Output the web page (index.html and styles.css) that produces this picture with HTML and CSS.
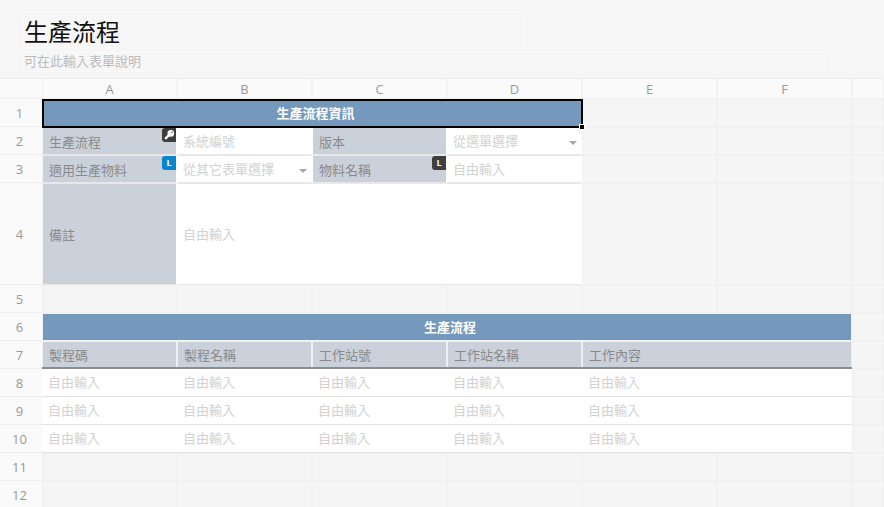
FILE: index.html
```html
<!DOCTYPE html>
<html lang="zh-Hant">
<head>
<meta charset="utf-8">
<title>生產流程</title>
<link rel="stylesheet" href="styles.css">
</head>
<body>
<header class="form-head">
  <h1 class="form-title">生產流程</h1>
  <p class="form-desc">可在此輸入表單說明</p>
</header>
<main class="sheet">
  <div class="corner"></div>
  <div class="col-h">A</div><div class="col-h">B</div><div class="col-h">C</div><div class="col-h">D</div><div class="col-h">E</div><div class="col-h">F</div><div class="col-h"></div>

  <div class="row-h">1</div>
  <div class="cell banner span-4 selected">生產流程資訊<span class="sel-handle"></span></div>
  <div class="cell"></div><div class="cell"></div><div class="cell"></div>

  <div class="row-h">2</div>
  <div class="cell label first">生產流程<span class="badge badge-dark"><svg class="key" viewBox="0 0 14 14"><circle cx="8.8" cy="5.4" r="3.3" fill="#fff"/><path d="M7 7.2 3.2 10.8" stroke="#fff" stroke-width="2.4" fill="none"/><circle cx="10" cy="4.2" r=".7" fill="#3e3e3e"/></svg></span></div>
  <div class="cell input ph">系統編號</div>
  <div class="cell label">版本</div>
  <div class="cell input ph">從選單選擇<span class="caret"></span></div>
  <div class="cell"></div><div class="cell"></div><div class="cell"></div>

  <div class="row-h">3</div>
  <div class="cell label first">適用生產物料<span class="badge badge-blue">L</span></div>
  <div class="cell input ph">從其它表單選擇<span class="caret"></span></div>
  <div class="cell label">物料名稱<span class="badge badge-dark">L</span></div>
  <div class="cell input ph">自由輸入</div>
  <div class="cell"></div><div class="cell"></div><div class="cell"></div>

  <div class="row-h tall">4</div>
  <div class="cell label first tall">備註</div>
  <div class="cell input ph span-3 tall">自由輸入</div>
  <div class="cell"></div><div class="cell"></div><div class="cell"></div>

  <div class="row-h">5</div>
  <div class="cell"></div><div class="cell"></div><div class="cell"></div><div class="cell"></div><div class="cell"></div><div class="cell"></div><div class="cell"></div>

  <div class="row-h">6</div>
  <div class="cell banner span-6">生產流程</div>
  <div class="cell"></div>

  <div class="row-h">7</div>
  <div class="cell th">製程碼</div><div class="cell th">製程名稱</div><div class="cell th">工作站號</div><div class="cell th">工作站名稱</div><div class="cell th span-2">工作內容</div>
  <div class="cell"></div>

  <div class="row-h">8</div>
  <div class="cell td ph">自由輸入</div><div class="cell td ph">自由輸入</div><div class="cell td ph">自由輸入</div><div class="cell td ph">自由輸入</div><div class="cell td ph span-2">自由輸入</div>
  <div class="cell"></div>

  <div class="row-h">9</div>
  <div class="cell td ph">自由輸入</div><div class="cell td ph">自由輸入</div><div class="cell td ph">自由輸入</div><div class="cell td ph">自由輸入</div><div class="cell td ph span-2">自由輸入</div>
  <div class="cell"></div>

  <div class="row-h">10</div>
  <div class="cell td ph">自由輸入</div><div class="cell td ph">自由輸入</div><div class="cell td ph">自由輸入</div><div class="cell td ph">自由輸入</div><div class="cell td ph span-2">自由輸入</div>
  <div class="cell"></div>

  <div class="row-h">11</div>
  <div class="cell"></div><div class="cell"></div><div class="cell"></div><div class="cell"></div><div class="cell"></div><div class="cell"></div><div class="cell"></div>

  <div class="row-h">12</div>
  <div class="cell"></div><div class="cell"></div><div class="cell"></div><div class="cell"></div><div class="cell"></div><div class="cell"></div><div class="cell"></div>
</main>
</body>
</html>
```
FILE: styles.css
```css
* { box-sizing: border-box; }
html, body { margin: 0; height: 100%; overflow: hidden; }
body {
  background: #f6f6f6;
  font-family: "Open Sans", "Noto Sans CJK TC", sans-serif;
  font-size: 13px;
  color: #888;
}
.form-head {
  height: 79px;
  padding: 12px 0 0 23px;
  border-bottom: 1px solid #eeeeee;
}
.form-title {
  margin: 0;
  width: 502px;
  height: 36px;
  line-height: 38px;
  font-size: 24px;
  font-weight: 400;
  color: #111;
  border: 1px solid #fafafa;
}
.form-desc {
  margin: 4px 0 0;
  width: 802px;
  height: 20px;
  line-height: 17px;
  font-size: 13px;
  color: #bbb;
  border: 1px solid #fafafa;
}
.sheet {
  display: grid;
  grid-template-columns: 42px repeat(6, 135px) 32px;
  grid-template-rows: 20px 28px 28px 28px 102px repeat(8, 28px);
}
.corner { background: #fafafa; border-bottom: 1px solid #f0f0f0; }
.col-h {
  background: #fafafa;
  border-bottom: 1px solid #f0f0f0;
  border-left: 1px solid #f2f2f2;
  border-right: 1px solid #f2f2f2;
  text-align: center;
  line-height: 20px;
  font-size: 13px;
  color: #999;
}
.row-h {
  background: #fafafa;
  border-bottom: 1px solid #efefef;
  padding-right: 3px;
  text-align: center;
  line-height: 28px;
  font-size: 13px;
  color: #999;
}
.row-h.tall { line-height: 102px; }
.cell {
  position: relative;
  background: #f5f5f5;
  border: 1px solid #f1f1f1;
  padding-left: 6px;
  line-height: 28px;
  white-space: nowrap;
}
.span-2 { grid-column: span 2; }
.span-3 { grid-column: span 3; }
.span-4 { grid-column: span 4; }
.span-6 { grid-column: span 6; }
.banner {
  background: #7499bd;
  border-color: #f2f2f2;
  color: #fff;
  font-weight: 700;
  font-size: 13px;
  text-align: center;
  line-height: 26px;
  padding: 0 0 0 6px;
}
.label {
  background: #cad1da;
  border-color: #e8e8e8 #fff;
  color: #8a8a8a;
}
.label.first { border-left-color: #f2f2f2; }
.label.tall { line-height: 102px; }
.input {
  background: #fff;
  border-color: #e8e8e8 #fff;
  padding-left: 5px;
  line-height: 26px;
}
.input.tall { line-height: 100px; }
.th {
  background: #cad1da;
  border-color: #f0f0f0;
  border-bottom: 0;
  padding-left: 6px;
  color: #8a8a8a;
  line-height: 26px;
}
.th::after {
  content: "";
  position: absolute;
  left: -1px;
  right: -1px;
  bottom: 0;
  height: 2px;
  background: #8c8c8c;
}
.td {
  background: #fff;
  border: 0;
  border-bottom: 1px solid #e2e2e2;
  line-height: 26px;
}
.ph { color: #d2d2d2; }
.selected {
  z-index: 2;
  margin: 0 -1px -1px 0;
  border: 2px solid #000;
  line-height: 24px;
}
.sel-handle {
  position: absolute;
  right: -3px;
  bottom: -3px;
  width: 4px;
  height: 4px;
  background: #000;
  outline: 1px solid #fff;
}
.badge {
  position: absolute;
  top: 0;
  right: 0;
  width: 14px;
  height: 14px;
  border-radius: 3px 0 0 3px;
  color: #fff;
  font-size: 9px;
  font-weight: 700;
  line-height: 14px;
  text-align: center;
}
.badge-dark { background: #3e3e3e; }
.badge-blue { background: #0a87cc; }
.key { display: block; width: 14px; height: 14px; }
.caret {
  position: absolute;
  right: 4px;
  top: 13px;
  width: 0;
  height: 0;
  border-left: 4px solid transparent;
  border-right: 4px solid transparent;
  border-top: 4px solid #a6a6a6;
}
```
